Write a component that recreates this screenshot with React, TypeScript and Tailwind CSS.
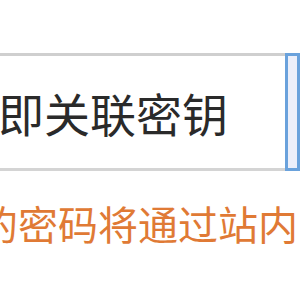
import React from "react";

export default function App() {
  return (
    <div
      className="w-[300px] h-[300px] overflow-hidden bg-white relative"
      style={{ fontFamily: '"Noto Sans CJK SC", "Noto Sans", sans-serif' }}
    >
      <div className="h-[53px]" />
      <div className="flex h-[118px]">
        <div className="w-[285px] shrink-0 border-t-[3px] border-b-[3px] border-t-[#cfcfcf] border-b-[#d4d4d4] flex items-center">
          <span className="-ml-[2px] text-[46px] leading-none text-[#2a2a2a] whitespace-nowrap">即关联密钥</span>
        </div>
        <div className="flex-1 border-[3px] border-[#6aa2dc] bg-[#eceffa]" />
      </div>
      <div className="mt-[32px] -ml-[22px] whitespace-nowrap text-[40px] leading-none text-[#e07a35]">
        的密码将通过站内
      </div>
    </div>
  );
}
